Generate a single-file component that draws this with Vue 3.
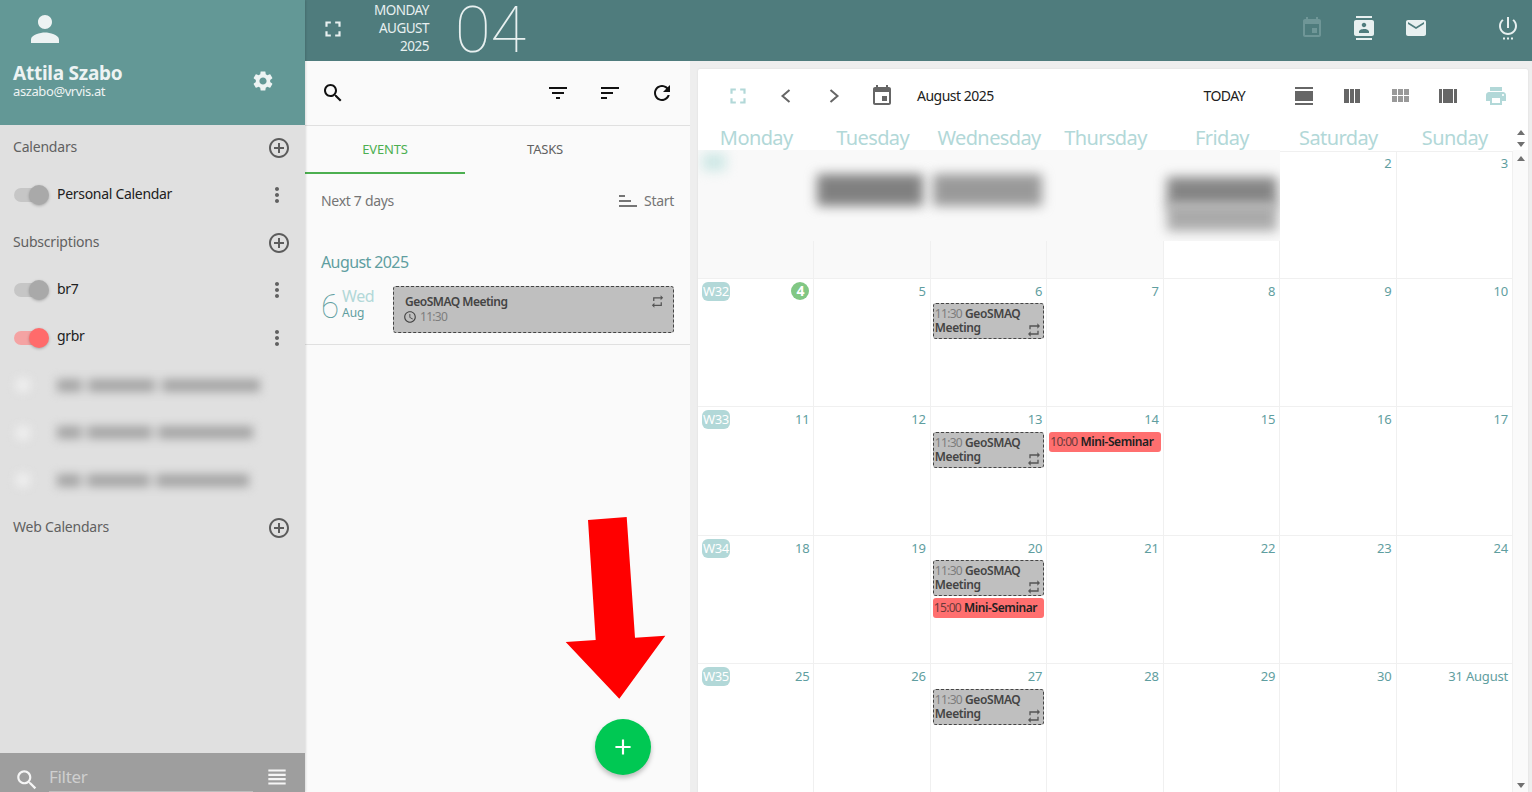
<script setup>
const icons = {
  person: 'M12 12c2.21 0 4-1.79 4-4s-1.79-4-4-4-4 1.79-4 4 1.79 4 4 4zm0 2c-2.67 0-8 1.34-8 4v2h16v-2c0-2.66-5.33-4-8-4z',
  gear: 'M19.14 12.94c.04-.3.06-.61.06-.94 0-.32-.02-.64-.07-.94l2.03-1.58c.18-.14.23-.41.12-.61l-1.92-3.32c-.12-.22-.37-.29-.59-.22l-2.39.96c-.5-.38-1.03-.7-1.62-.94l-.36-2.54c-.04-.24-.24-.41-.48-.41h-3.84c-.24 0-.43.17-.47.41l-.36 2.54c-.59.24-1.13.57-1.62.94l-2.39-.96c-.22-.08-.47 0-.59.22L2.74 8.87c-.12.21-.08.47.12.61l2.03 1.58c-.05.3-.09.63-.09.94s.02.64.07.94l-2.03 1.58c-.18.14-.23.41-.12.61l1.92 3.32c.12.22.37.29.59.22l2.39-.96c.5.38 1.03.7 1.62.94l.36 2.54c.05.24.24.41.48.41h3.84c.24 0 .44-.17.47-.41l.36-2.54c.59-.24 1.13-.56 1.62-.94l2.39.96c.22.08.47 0 .59-.22l1.92-3.32c.12-.22.07-.47-.12-.61l-2.01-1.58zM12 15.6c-1.98 0-3.6-1.62-3.6-3.6s1.62-3.6 3.6-3.6 3.6 1.62 3.6 3.6-1.62 3.6-3.6 3.6z',
  fullscreen: 'M7 14H5v5h5v-2H7v-3zm-2-4h2V7h3V5H5v5zm12 7h-3v2h5v-5h-2v3zM14 5v2h3v3h2V5h-5z',
  search: 'M15.5 14h-.79l-.28-.27C15.41 12.59 16 11.11 16 9.5 16 5.91 13.09 3 9.5 3S3 5.91 3 9.5 5.91 16 9.5 16c1.61 0 3.09-.59 4.23-1.57l.27.28v.79l5 4.99L20.49 19l-4.99-5zm-6 0C7.01 14 5 11.99 5 9.5S7.01 5 9.5 5 14 7.01 14 9.5 11.99 14 9.5 14z',
  filter: 'M10 18h4v-2h-4v2zM3 6v2h18V6H3zm3 7h12v-2H6v2z',
  sort: 'M3 18h6v-2H3v2zM3 6v2h18V6H3zm0 7h12v-2H3v2z',
  refresh: 'M17.65 6.35C16.2 4.9 14.21 4 12 4c-4.42 0-7.99 3.58-7.99 8s3.57 8 7.99 8c3.73 0 6.84-2.55 7.73-6h-2.08c-.82 2.33-3.04 4-5.65 4-3.31 0-6-2.69-6-6s2.69-6 6-6c1.66 0 3.14.69 4.22 1.78L13 11h7V4l-2.35 2.35z',
  add: 'M13 7h-2v4H7v2h4v4h2v-4h4v-2h-4V7zm-1-5C6.48 2 2 6.48 2 12s4.48 10 10 10 10-4.48 10-10S17.52 2 12 2zm0 18c-4.41 0-8-3.59-8-8s3.59-8 8-8 8 3.59 8 8-3.59 8-8 8z',
  more: 'M12 8c1.1 0 2-.9 2-2s-.9-2-2-2-2 .9-2 2 .9 2 2 2zm0 2c-1.1 0-2 .9-2 2s.9 2 2 2 2-.9 2-2-.9-2-2-2zm0 6c-1.1 0-2 .9-2 2s.9 2 2 2 2-.9 2-2-.9-2-2-2z',
  repeat: 'M7 7h10v3l4-4-4-4v3H5v6h2V7zm10 10H7v-3l-4 4 4 4v-3h12v-6h-2v4z',
  clock: 'M11.99 2C6.47 2 2 6.48 2 12s4.47 10 9.99 10C17.52 22 22 17.52 22 12S17.52 2 11.99 2zM12 20c-4.42 0-8-3.58-8-8s3.58-8 8-8 8 3.58 8 8-3.58 8-8 8zm.5-13H11v6l5.25 3.15.75-1.23-4.5-2.67z',
  event: 'M17 12h-5v5h5v-5zM16 1v2H8V1H6v2H5c-1.11 0-1.99.9-1.99 2L3 19c0 1.1.89 2 2 2h14c1.1 0 2-.9 2-2V5c0-1.1-.9-2-2-2h-1V1h-2zm3 18H5V8h14v11z',
  contacts: 'M20 0H4v2h16V0zM4 24h16v-2H4v2zM20 4H4c-1.1 0-2 .9-2 2v12c0 1.1.9 2 2 2h16c1.1 0 2-.9 2-2V6c0-1.1-.9-2-2-2zm-8 2.75c1.24 0 2.25 1.01 2.25 2.25s-1.01 2.25-2.25 2.25S9.75 10.24 9.75 9 10.76 6.75 12 6.75zM17 17H7v-1.5c0-1.67 3.33-2.5 5-2.5s5 .83 5 2.5V17z',
  email: 'M20 4H4c-1.1 0-1.99.9-1.99 2L2 18c0 1.1.9 2 2 2h16c1.1 0 2-.9 2-2V6c0-1.1-.9-2-2-2zm0 4l-8 5-8-5V6l8 5 8-5v2z',
  power: 'M13 1h-2v11h2V1zm4.83 2.17l-1.42 1.42C17.99 5.86 19 7.81 19 10c0 3.87-3.13 7-7 7s-7-3.13-7-7c0-2.19 1.01-4.14 2.58-5.42L6.17 3.17C4.23 4.82 3 7.26 3 10c0 4.97 4.03 9 9 9s9-4.03 9-9c0-2.74-1.23-5.18-3.17-6.83zM7 21.5h2v2H7zm4 0h2v2h-2zm4 0h2v2h-2z',
  print: 'M19 8H5c-1.66 0-3 1.34-3 3v6h4v4h12v-4h4v-6c0-1.66-1.34-3-3-3zm-3 11H8v-5h8v5zm3-7c-.55 0-1-.45-1-1s.45-1 1-1 1 .45 1 1-.45 1-1 1zm-1-9H6v4h12V3z',
  viewDay: 'M3 21h18v-2H3v2zM3 17h18V7H3v10zM3 3v2h18V3H3z',
  viewColumn: 'M10 19h4V5h-4v14zm-6 0h5V5H4v14zM15 5v14h5V5h-5z',
  viewModule: 'M4 11h5V5H4v6zm0 7h5v-6H4v6zm6 0h5v-6h-5v6zm6 0h5v-6h-5v6zm-6-7h5V5h-5v6zm6-6v6h5V5h-5z',
  viewArray: 'M3 19h3V5H3v14zM18 5v14h3V5h-3zM7 19h10V5H7v14z',
  headline: 'M4 15h16v-2H4v2zm0 4h16v-2H4v2zm0-8h16V9H4v2zm0-6v2h16V5H4z',
  plus: 'M19 13h-6v6h-2v-6H5v-2h6V5h2v6h6v2z'
}

const sideRows = [
  { kind: 'head', label: 'Calendars' },
  { kind: 'cal', label: 'Personal Calendar', color: 'grey' },
  { kind: 'head', label: 'Subscriptions' },
  { kind: 'cal', label: 'br7', color: 'grey' },
  { kind: 'cal', label: 'grbr', color: 'red' },
  { kind: 'blur', width: 203 },
  { kind: 'blur', width: 196 },
  { kind: 'blur', width: 192 },
  { kind: 'head', label: 'Web Calendars' }
]

const weekdays = ['Monday', 'Tuesday', 'Wednesday', 'Thursday', 'Friday', 'Saturday', 'Sunday']

const geo = { type: 'geo', time: '11:30', title: 'GeoSMAQ Meeting' }
const mini = (time) => ({ type: 'mini', time, title: 'Mini-Seminar' })

const cells = [
  { n: '', past: true }, { n: '', past: true }, { n: '', past: true }, { n: '', past: true }, { n: '' }, { n: '2' }, { n: '3' },
  { n: '4', week: 'W32', today: true }, { n: '5' }, { n: '6', ev: [geo] }, { n: '7' }, { n: '8' }, { n: '9' }, { n: '10' },
  { n: '11', week: 'W33' }, { n: '12' }, { n: '13', ev: [geo] }, { n: '14', ev: [mini('10:00')] }, { n: '15' }, { n: '16' }, { n: '17' },
  { n: '18', week: 'W34' }, { n: '19' }, { n: '20', ev: [geo, mini('15:00')] }, { n: '21' }, { n: '22' }, { n: '23' }, { n: '24' },
  { n: '25', week: 'W35' }, { n: '26' }, { n: '27', ev: [geo] }, { n: '28' }, { n: '29' }, { n: '30' }, { n: '31 August' }
]
</script>

<template>
  <div class="app">
    <aside class="sidebar">
      <div class="profile">
        <svg class="avatar" viewBox="0 0 24 24"><path :d="icons.person" /></svg>
        <div class="profile-row">
          <div>
            <div class="profile-name">Attila Szabo</div>
            <div class="profile-mail">aszabo@vrvis.at</div>
          </div>
          <svg class="gear" viewBox="0 0 24 24"><path :d="icons.gear" /></svg>
        </div>
      </div>

      <div class="side-list">
        <div v-for="(row, i) in sideRows" :key="i" class="side-row" :class="row.kind">
          <template v-if="row.kind === 'head'">
            <span class="side-label">{{ row.label }}</span>
            <svg class="side-add" viewBox="0 0 24 24"><path :d="icons.add" /></svg>
          </template>
          <template v-else-if="row.kind === 'cal'">
            <span class="toggle" :class="row.color"><i></i></span>
            <span class="cal-name">{{ row.label }}</span>
            <svg class="side-more" viewBox="0 0 24 24"><path :d="icons.more" /></svg>
          </template>
          <template v-else>
            <span class="blur-dot"></span>
            <span class="blur-text" :style="{ width: row.width + 'px' }"></span>
          </template>
        </div>
      </div>

      <div class="filter-bar">
        <svg class="filter-search" viewBox="0 0 24 24"><path :d="icons.search" /></svg>
        <span class="filter-input">Filter</span>
        <svg class="filter-menu" viewBox="0 0 24 24"><path :d="icons.headline" /></svg>
      </div>
    </aside>

    <div class="main">
      <header class="topbar">
        <svg class="top-full" viewBox="0 0 24 24"><path :d="icons.fullscreen" /></svg>
        <div class="top-date">
          <div>MONDAY</div>
          <div>AUGUST</div>
          <div>2025</div>
        </div>
        <div class="top-day">04</div>
        <div class="top-icons">
          <svg class="dim" viewBox="0 0 24 24"><path :d="icons.event" /></svg>
          <svg viewBox="0 0 24 24"><path :d="icons.contacts" /></svg>
          <svg viewBox="0 0 24 24"><path :d="icons.email" /></svg>
          <svg class="power" viewBox="0 0 24 24"><path :d="icons.power" /></svg>
        </div>
      </header>

      <div class="content">
        <section class="agenda">
          <div class="agenda-tools">
            <svg viewBox="0 0 24 24"><path :d="icons.search" /></svg>
            <span class="spacer"></span>
            <svg viewBox="0 0 24 24"><path :d="icons.filter" /></svg>
            <svg viewBox="0 0 24 24"><path :d="icons.sort" /></svg>
            <svg viewBox="0 0 24 24"><path :d="icons.refresh" /></svg>
          </div>

          <div class="tabs">
            <div class="tab active">EVENTS</div>
            <div class="tab">TASKS</div>
          </div>

          <div class="range">
            <span>Next 7 days</span>
            <span class="range-sort">
              <svg viewBox="0 0 24 24"><path :d="icons.sort" transform="matrix(1 0 0 -1 0 24)" /></svg>
              Start
            </span>
          </div>

          <div class="month">August 2025</div>

          <div class="agenda-day">
            <div class="day-num">6</div>
            <div class="day-names">
              <div class="day-week">Wed</div>
              <div class="day-month">Aug</div>
            </div>
            <div class="agenda-event">
              <div class="agenda-title">GeoSMAQ Meeting</div>
              <div class="agenda-time">
                <svg viewBox="0 0 24 24"><path :d="icons.clock" /></svg>
                11:30
              </div>
              <svg class="agenda-repeat" viewBox="0 0 24 24"><path :d="icons.repeat" /></svg>
            </div>
          </div>

          <div class="fab">
            <svg viewBox="0 0 24 24"><path :d="icons.plus" /></svg>
          </div>
        </section>

        <section class="calendar">
          <div class="cal-tools">
            <button class="cal-btn pale big"><svg viewBox="0 0 24 24"><path :d="icons.fullscreen" /></svg></button>
            <button class="cal-btn"><svg class="chev" viewBox="0 0 24 24"><path d="M15.5 6l-7 6 7 6" /></svg></button>
            <button class="cal-btn"><svg class="chev" viewBox="0 0 24 24"><path d="M8.5 6l7 6-7 6" /></svg></button>
            <button class="cal-btn"><svg viewBox="0 0 24 24"><path :d="icons.event" /></svg></button>
            <span class="cal-title">August 2025</span>
            <span class="spacer"></span>
            <span class="cal-today">TODAY</span>
            <button class="cal-btn"><svg viewBox="0 0 24 24"><path :d="icons.viewDay" /></svg></button>
            <button class="cal-btn"><svg viewBox="0 0 24 24"><path :d="icons.viewColumn" /></svg></button>
            <button class="cal-btn soft"><svg viewBox="0 0 24 24"><path :d="icons.viewModule" /></svg></button>
            <button class="cal-btn"><svg viewBox="0 0 24 24"><path :d="icons.viewArray" /></svg></button>
            <button class="cal-btn pale"><svg viewBox="0 0 24 24"><path :d="icons.print" /></svg></button>
          </div>

          <div class="cal-head">
            <div class="weekdays">
              <div v-for="d in weekdays" :key="d" class="weekday">{{ d }}</div>
            </div>
            <div class="head-scroll"><i class="up"></i><i class="down"></i></div>
          </div>

          <div class="cal-body">
            <div class="grid">
              <div v-for="(c, i) in cells" :key="i" class="cell" :class="{ shaded: c.past }">
                <div class="cell-top">
                  <span v-if="c.week" class="week">{{ c.week }}</span>
                  <span class="num" :class="{ today: c.today }">{{ c.n }}</span>
                </div>
                <div
                  v-for="(e, j) in c.ev"
                  :key="j"
                  class="ev"
                  :class="e.type"
                >
                  <span class="ev-time">{{ e.time }}</span>
                  <b class="ev-title">{{ e.title }}</b>
                  <svg v-if="e.type === 'geo'" class="ev-repeat" viewBox="0 0 24 24"><path :d="icons.repeat" /></svg>
                </div>
              </div>
              <div class="past">
                <i class="smudge badge"></i>
                <i class="smudge tue"></i>
                <i class="smudge wed"></i>
                <i class="smudge fri"></i>
                <i class="smudge fri-low"></i>
              </div>
            </div>
            <div class="body-scroll"><i class="up"></i><i class="down"></i></div>
          </div>
        </section>
      </div>
    </div>

    <svg class="arrow" viewBox="0 0 1532 792"><polygon points="588,520 626.7,517 635,637.7 665.3,635.7 619.3,698.7 565.7,642 595.7,640" /></svg>
  </div>
</template>

<style scoped>
.app {
  display: flex;
  height: 792px;
  overflow: hidden;
  position: relative;
  background: #eeeeee;
  font-family: "Noto Sans", "Open Sans", sans-serif;
  font-size: 14px;
  color: #212121;
}
svg {
  display: block;
  fill: currentColor;
  flex: none;
}
.spacer {
  flex: 1;
}

/* sidebar */
.sidebar {
  width: 305px;
  flex: none;
  display: flex;
  flex-direction: column;
  background: #e0e0e0;
  box-shadow: 1px 0 2px rgba(0, 0, 0, 0.12);
  z-index: 2;
}
.profile {
  height: 125px;
  flex: none;
  box-sizing: border-box;
  padding: 8px 30px 0 13px;
  background: #639896;
  color: #edf3f3;
}
.avatar {
  width: 42px;
  height: 42px;
  margin-left: 11px;
}
.profile-row {
  display: flex;
  justify-content: space-between;
  align-items: center;
  margin-top: 11px;
}
.profile-name {
  font-size: 19px;
  font-weight: 700;
  line-height: 24px;
  letter-spacing: -0.25px;
}
.profile-mail {
  font-size: 13px;
  line-height: 13px;
  letter-spacing: -0.4px;
}
.gear {
  width: 24px;
  height: 24px;
  margin-top: 2px;
}
.side-list {
  flex: 1;
  margin-top: -1px;
}
.side-row {
  height: 47.5px;
  display: flex;
  align-items: center;
  padding: 0 14px 0 13px;
  box-sizing: border-box;
}
.side-label {
  flex: 1;
  margin-top: -2px;
  color: #616161;
  letter-spacing: -0.2px;
}
.side-add {
  width: 24px;
  height: 24px;
  color: #5c5c5c;
}
.toggle {
  position: relative;
  width: 31px;
  height: 14px;
  margin: 0 12px 0 1px;
  border-radius: 7px;
  background: #c6c6c6;
}
.toggle i {
  position: absolute;
  right: -4px;
  top: -3px;
  width: 20px;
  height: 20px;
  border-radius: 50%;
  background: #a9a9a9;
  box-shadow: 0 1px 3px rgba(0, 0, 0, 0.25);
}
.toggle.red {
  background: #f4a3a3;
}
.toggle.red i {
  background: #ff6b6b;
}
.cal-name {
  flex: 1;
  margin-top: -4px;
  letter-spacing: -0.3px;
}
.side-more {
  width: 24px;
  height: 24px;
  margin-right: 2px;
  color: #616161;
}
.blur-dot {
  width: 16px;
  height: 16px;
  margin-left: 2px;
  border-radius: 50%;
  background: #ededed;
  filter: blur(4px);
}
.blur-text {
  height: 13px;
  margin-left: 26px;
  background: linear-gradient(90deg, #a6a6a6 0 12%, #d4d4d4 12% 16%, #a6a6a6 16% 48%, #d4d4d4 48% 52%, #a6a6a6 52%);
  filter: blur(5px);
}
.filter-bar {
  height: 39px;
  flex: none;
  display: flex;
  align-items: center;
  box-sizing: border-box;
  padding: 0 15px 0 14px;
  background: #9e9e9e;
  color: #f5f5f5;
}
.filter-search {
  width: 26px;
  height: 26px;
  margin-top: 15px;
}
.filter-input {
  flex: 1;
  align-self: stretch;
  margin: 0 11px 0 9px;
  padding-top: 11px;
  font-size: 17px;
  line-height: 26px;
  color: #cfcfcf;
  letter-spacing: -0.3px;
  border-bottom: 1px solid #bdbdbd;
  box-sizing: border-box;
}
.filter-menu {
  width: 26px;
  height: 26px;
  margin-top: 9px;
}

/* top bar */
.main {
  flex: 1;
  min-width: 0;
  display: flex;
  flex-direction: column;
}
.topbar {
  height: 61px;
  flex: none;
  display: flex;
  align-items: center;
  padding: 0 12px 0 15px;
  background: #4f7c7d;
  color: #e8f0f0;
}
.top-full {
  width: 26px;
  height: 26px;
  margin-top: -3px;
}
.top-date {
  width: 83px;
  text-align: right;
  font-size: 13.5px;
  line-height: 18px;
  letter-spacing: -0.5px;
  margin-top: -5px;
}
.top-day {
  margin-left: 26px;
  font-family: Roboto, sans-serif;
  font-size: 65px;
  font-weight: 100;
  line-height: 61px;
}
.top-icons {
  margin-left: auto;
  display: flex;
  align-items: center;
  gap: 28px;
  margin-top: -5px;
}
.top-icons svg {
  width: 24px;
  height: 24px;
}
.top-icons .dim {
  color: #6f9697;
}
.top-icons .power {
  margin-left: 40px;
}

.content {
  flex: 1;
  min-height: 0;
  display: flex;
}

/* agenda column */
.agenda {
  position: relative;
  width: 385px;
  flex: none;
  background: #fafafa;
}
.agenda-tools {
  height: 65px;
  box-sizing: border-box;
  display: flex;
  align-items: center;
  gap: 28px;
  padding: 0 16px;
  border-bottom: 1px solid #e0e0e0;
  color: #111;
}
.agenda-tools svg {
  width: 24px;
  height: 24px;
}
.tabs {
  display: flex;
}
.tab {
  width: 160px;
  height: 48px;
  box-sizing: border-box;
  text-align: center;
  line-height: 46px;
  font-size: 13px;
  color: #616161;
  letter-spacing: -0.2px;
}
.tab.active {
  color: #4caf50;
  border-bottom: 2px solid #4caf50;
}
.range {
  display: flex;
  justify-content: space-between;
  align-items: center;
  padding: 15px 16px 0;
  color: #757575;
  letter-spacing: -0.3px;
  line-height: 20px;
}
.range-sort {
  display: flex;
  align-items: center;
  gap: 4px;
}
.range-sort svg {
  width: 24px;
  height: 24px;
}
.month {
  margin: 38px 0 0 16px;
  font-size: 16px;
  line-height: 22px;
  color: #5f9ea0;
  letter-spacing: -0.6px;
}
.agenda-day {
  display: flex;
  align-items: flex-start;
  padding: 13px 16px 11px;
  border-bottom: 1px solid #e0e0e0;
}
.day-num {
  width: 21px;
  font-family: Roboto, sans-serif;
  font-weight: 100;
  font-size: 33px;
  line-height: 38px;
  margin-top: 2px;
  color: #5f9ea0;
}
.day-week {
  font-size: 16px;
  line-height: 18px;
  color: #b2d8d8;
  letter-spacing: -0.4px;
}
.day-month {
  font-size: 12px;
  line-height: 16px;
  color: #5f9ea0;
}
.day-names {
  width: 51px;
  flex: none;
  margin-top: 1px;
}
.agenda-event {
  position: relative;
  flex: 1;
  height: 47px;
  box-sizing: border-box;
  padding: 7px 11px;
  background: #bfbfbf;
  border: 1px dashed #444;
  border-radius: 3px;
}
.agenda-title {
  font-size: 12px;
  font-weight: 600;
  line-height: 16px;
  color: #444;
  letter-spacing: -0.5px;
}
.agenda-time {
  display: flex;
  align-items: center;
  gap: 3px;
  margin-left: -2px;
  font-size: 12px;
  line-height: 14px;
  color: #7d7d7d;
  letter-spacing: -0.7px;
}
.agenda-time svg {
  width: 14px;
  height: 14px;
  color: #444;
}
.agenda-repeat {
  position: absolute;
  right: 8px;
  top: 7px;
  width: 15px;
  height: 15px;
  color: #555;
}
.fab {
  position: absolute;
  left: 290px;
  top: 658px;
  width: 56px;
  height: 56px;
  border-radius: 50%;
  background: #00c853;
  color: #fff;
  display: flex;
  align-items: center;
  justify-content: center;
  box-shadow: 0 3px 5px rgba(0, 0, 0, 0.25);
}
.fab svg {
  width: 26px;
  height: 26px;
}
.arrow {
  position: absolute;
  left: 0;
  top: 0;
  width: 1532px;
  height: 792px;
  z-index: 5;
  fill: #ff0000;
  pointer-events: none;
}

/* calendar */
.calendar {
  flex: 1;
  min-width: 0;
  margin: 8px 4px 0 8px;
  display: flex;
  flex-direction: column;
  background: #fff;
  border-radius: 2px 2px 0 0;
  box-shadow: 0 0 2px rgba(0, 0, 0, 0.1);
}
.cal-tools {
  height: 57px;
  flex: none;
  display: flex;
  align-items: center;
  padding: 0 8px 0 16px;
  box-sizing: border-box;
}
.cal-btn {
  width: 48px;
  height: 48px;
  padding: 0;
  border: 0;
  background: none;
  display: flex;
  align-items: center;
  justify-content: center;
  color: #666;
  margin-top: -3px;
}
.cal-btn svg {
  width: 24px;
  height: 24px;
}
.cal-btn.pale {
  color: #b2d8d8;
}
.cal-btn.big svg {
  width: 26px;
  height: 26px;
}
.cal-btn.soft {
  color: #999;
}
.cal-btn .chev {
  fill: none;
  stroke: #666;
  stroke-width: 2;
}
.cal-title {
  margin: -4px 0 0 11px;
  letter-spacing: -0.5px;
  color: #212121;
}
.cal-today {
  margin: -4px 35px 0 0;
  font-size: 14px;
  letter-spacing: -0.6px;
  color: #212121;
}
.cal-head {
  height: 24px;
  flex: none;
  display: flex;
}
.weekdays {
  width: 815px;
  flex: none;
  display: grid;
  grid-template-columns: repeat(7, 1fr);
  overflow: hidden;
}
.weekday {
  text-align: center;
  font-size: 20px;
  line-height: 23px;
  color: #b2d8d8;
  letter-spacing: -0.6px;
}
.head-scroll,
.body-scroll {
  flex: 1;
  display: flex;
  flex-direction: column;
  justify-content: space-between;
  align-items: center;
  background: #fafafa;
}
.head-scroll {
  padding: 4px 0 3px;
  background: #fff;
}
.body-scroll {
  padding: 6px 0 4px;
}
.up {
  width: 0;
  height: 0;
  border: 4px solid transparent;
  border-top: 0;
  border-bottom: 5px solid #707070;
}
.down {
  width: 0;
  height: 0;
  border: 4px solid transparent;
  border-bottom: 0;
  border-top: 5px solid #707070;
}
.cal-body {
  flex: 1;
  min-height: 0;
  display: flex;
  overflow: hidden;
}
.grid {
  position: relative;
  width: 815px;
  flex: none;
  margin-top: 0.6px;
  display: grid;
  grid-template-columns: repeat(7, minmax(0, 1fr));
  grid-template-rows: repeat(5, 128.4px);
  box-shadow: inset 0 1px #f0f0f0;
  box-sizing: border-box;
}
.cell {
  min-width: 0;
  padding: 0 2px;
  border-right: 1px solid #f0f0f0;
  border-bottom: 1px solid #f0f0f0;
  box-sizing: border-box;
}
.cell.shaded {
  background: #f9f9f9;
}
.cell-top {
  display: flex;
  justify-content: space-between;
  align-items: flex-start;
  height: 24.4px;
  padding: 3px 2px 0 2px;
  box-sizing: border-box;
}
.week {
  height: 19px;
  padding: 0 1px;
  border-radius: 6px;
  background: #b2d8d8;
  color: #fff;
  font-size: 13px;
  line-height: 19px;
  letter-spacing: -0.4px;
}
.num {
  margin-left: auto;
  font-size: 13px;
  line-height: 18px;
  color: #5f9ea0;
  letter-spacing: -0.2px;
}
.num.today {
  width: 18px;
  height: 18px;
  border-radius: 50%;
  background: #81c784;
  color: #fff;
  text-align: center;
  font-size: 14px;
  font-weight: 700;
}
.ev {
  position: relative;
  box-sizing: border-box;
  font-size: 12px;
  line-height: 14px;
  border-radius: 3px;
  letter-spacing: -0.3px;
}
.ev.geo {
  height: 36px;
  padding: 3px 1px;
  background: #bfbfbf;
  border: 1px dashed #444;
  color: #444;
}
.ev.mini {
  height: 20px;
  padding: 3px 1px;
  background: #ff6f6f;
  color: #212121;
  white-space: nowrap;
}
.ev.geo + .ev.mini {
  margin-top: 2px;
}
.ev-title {
  font-weight: 600;
  letter-spacing: -0.4px;
}
.ev-time {
  color: #7d7d7d;
  margin-right: 3px;
  letter-spacing: -0.7px;
}
.mini .ev-time {
  color: #6b3a3a;
}
.ev-repeat {
  position: absolute;
  right: 1px;
  bottom: 0;
  width: 16px;
  height: 16px;
  color: #555;
}
.past {
  position: absolute;
  left: 0;
  top: -4px;
  width: 582px;
  height: 94px;
  background: #f9f9f9;
  overflow: hidden;
}
.smudge {
  position: absolute;
  filter: blur(6px);
  background: #808080;
}
.smudge.badge {
  left: 4px;
  top: 6px;
  width: 24px;
  height: 18px;
  background: #cfe8e6;
}
.smudge.tue {
  left: 119px;
  top: 27px;
  width: 106px;
  height: 32px;
}
.smudge.wed {
  left: 235px;
  top: 27px;
  width: 109px;
  height: 32px;
  background: #999;
}
.smudge.fri {
  left: 469px;
  top: 30px;
  width: 110px;
  height: 30px;
  background: #858585;
}
.smudge.fri-low {
  left: 469px;
  top: 56px;
  width: 110px;
  height: 28px;
  background: #aaa;
}
</style>

<style>
html, body {
  margin: 0;
}
</style>
